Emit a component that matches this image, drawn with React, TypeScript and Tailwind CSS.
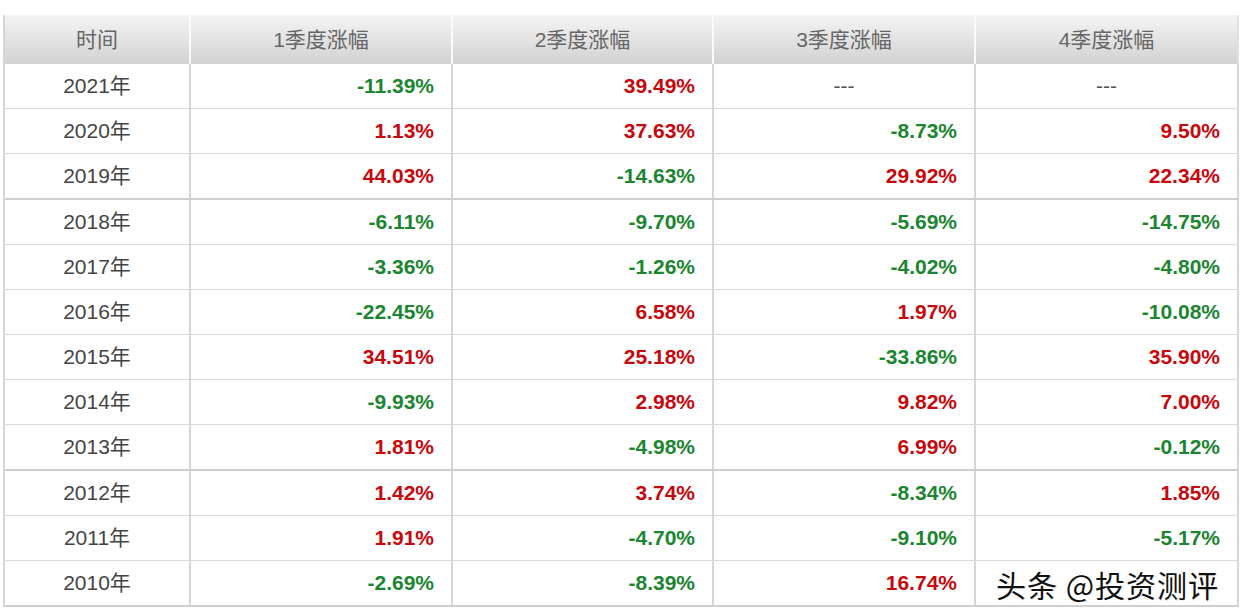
import React from "react";

type Cell = string;
const rows: [string, Cell, Cell, Cell, Cell][] = [
  ["2021年", "-11.39%", "39.49%", "---", "---"],
  ["2020年", "1.13%", "37.63%", "-8.73%", "9.50%"],
  ["2019年", "44.03%", "-14.63%", "29.92%", "22.34%"],
  ["2018年", "-6.11%", "-9.70%", "-5.69%", "-14.75%"],
  ["2017年", "-3.36%", "-1.26%", "-4.02%", "-4.80%"],
  ["2016年", "-22.45%", "6.58%", "1.97%", "-10.08%"],
  ["2015年", "34.51%", "25.18%", "-33.86%", "35.90%"],
  ["2014年", "-9.93%", "2.98%", "9.82%", "7.00%"],
  ["2013年", "1.81%", "-4.98%", "6.99%", "-0.12%"],
  ["2012年", "1.42%", "3.74%", "-8.34%", "1.85%"],
  ["2011年", "1.91%", "-4.70%", "-9.10%", "-5.17%"],
  ["2010年", "-2.69%", "-8.39%", "16.74%", ""],
];

const widths = ["w-[186px]", "w-[262px]", "w-[261px]", "w-[262px]", "w-[263px]"];
const headers = ["时间", "1季度涨幅", "2季度涨幅", "3季度涨幅", "4季度涨幅"];
const thick = new Set([2, 8, 11]);

function ValueCell({ v, w }: { v: string; w: string }) {
  if (v === "---") {
    return (
      <div className={`${w} shrink-0 h-full flex items-center justify-center border-r-2 border-[#d6d6d6] text-[#555]`}>
        ---
      </div>
    );
  }
  const neg = v.startsWith("-");
  return (
    <div
      className={`${w} shrink-0 h-full flex items-center justify-end pr-[17px] border-r-2 border-[#d6d6d6] font-bold ${
        neg ? "text-[#1b8531]" : "text-[#c8070d]"
      }`}
    >
      {v}
    </div>
  );
}

export default function App() {
  return (
    <div
      className="w-[1242px] h-[616px] bg-white pt-[15px] pl-[3px] relative overflow-hidden"
      style={{ fontFamily: '"Liberation Sans", Arial, "Noto Sans CJK SC", sans-serif' }}
    >
      <div className="w-[1236px] border-l-2 border-[#d6d6d6] text-[21px]">
        <div className="flex h-[49px] bg-linear-to-b from-[#f4f4f4] to-[#d2d2d2] text-[#666]">
          {headers.map((h, i) => (
            <div
              key={h}
              className={`${widths[i]} shrink-0 h-full flex items-center justify-center ${
                i < 4 ? "border-r-2 border-[#fafafa]" : "border-r-2 border-[#e0e0e0]"
              }`}
            >
              {h}
            </div>
          ))}
        </div>
        {rows.map((r, ri) => (
          <div
            key={r[0]}
            className={`flex ${thick.has(ri) ? "h-[46px] border-b-2 border-[#cfcfcf]" : "h-[45px] border-b border-[#dadada]"}`}
          >
            <div className={`${widths[0]} shrink-0 h-full flex items-center justify-center border-r-2 border-[#d6d6d6] text-[#444]`}>
              {r[0]}
            </div>
            {r.slice(1).map((v, ci) => (
              <ValueCell key={ci} v={v} w={widths[ci + 1]} />
            ))}
          </div>
        ))}
      </div>
      <div
        className="absolute left-[996px] top-[562px] text-[30px] text-[#111] whitespace-nowrap tracking-[1px]"
        style={{
          fontFamily: '"Noto Sans CJK SC", sans-serif',
          textShadow:
            "2px 2px 0 #fff, -2px -2px 0 #fff, 2px -2px 0 #fff, -2px 2px 0 #fff, 1px 1px 1px #888",
        }}
      >
        头条 @投资测评
      </div>
    </div>
  );
}
